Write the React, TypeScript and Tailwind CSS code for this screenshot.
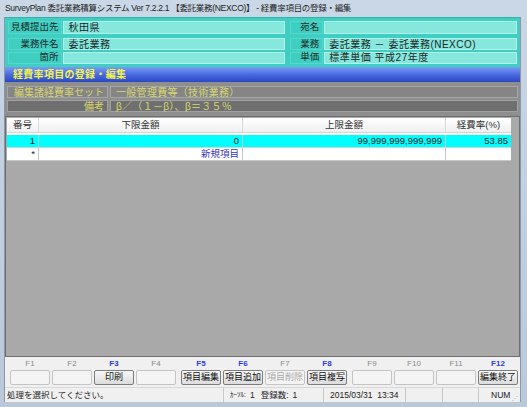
import React from 'react';

const fKeys = [
  { key: 'F1', label: '', on: false },
  { key: 'F2', label: '', on: false },
  { key: 'F3', label: '印刷', on: true },
  { key: 'F4', label: '', on: false },
  { key: 'F5', label: '項目編集', on: true },
  { key: 'F6', label: '項目追加', on: true },
  { key: 'F7', label: '項目削除', on: false },
  { key: 'F8', label: '項目複写', on: true },
  { key: 'F9', label: '', on: false },
  { key: 'F10', label: '', on: false },
  { key: 'F11', label: '', on: false },
  { key: 'F12', label: '編集終了', on: true },
];

function HeadLabel({ text, w }: { text: string; w: string }) {
  return (
    <div className={`${w} h-full flex items-center justify-end pr-[3px] text-[9.5px] whitespace-nowrap text-[#1a2a28] border border-[#58d8cb]`}>
      {text}
    </div>
  );
}

function HeadBox({ text, w }: { text: string; w: string }) {
  return (
    <div className={`${w} h-full flex items-center pl-[4px] text-[10px] tracking-[0.5px] whitespace-nowrap text-[#1a2a28] bg-[#86e7dc] border border-[#b2f2ea]`}>
      {text}
    </div>
  );
}

function FKeyGroup({ items }: { items: typeof fKeys }) {
  return (
    <div className="flex gap-[2px]">
      {items.map((f) => (
        <div key={f.key} className="w-[40px] flex flex-col items-center">
          <div className={`h-[11px] leading-[11px] text-[8px] ${f.on ? 'text-[#2b3cf0] font-bold' : 'text-[#8a8a8a]'}`}>{f.key}</div>
          {f.label && f.on ? (
            <div className="mt-[1px] w-full h-[15px] flex items-center justify-center text-[9px] text-[#111] rounded-[2px] border border-[#7d7d7d] bg-gradient-to-b from-[#f8f8f8] to-[#dcdcdc]">
              {f.label}
            </div>
          ) : (
            <div className="mt-[1px] w-full h-[15px] flex items-center justify-center text-[9px] text-[#a8a8a8] rounded-[2px] border border-[#c4c4c4] bg-[#f4f4f4]">
              {f.label}
            </div>
          )}
        </div>
      ))}
    </div>
  );
}

export default function App() {
  return (
    <div className="w-[527px] h-[407px] bg-gradient-to-b from-[#c9d7e6] to-[#b9c9da] font-['Liberation_Sans','Noto_Sans_CJK_JP',sans-serif] overflow-hidden">
      {/* title */}
      <div className="h-[17px] flex items-center pl-[5px] text-[8.5px] tracking-[-0.3px] text-[#1e1e1e] whitespace-nowrap">
        SurveyPlan 委託業務積算システム Ver 7.2.2.1 【委託業務(NEXCO)】 - 経費率項目の登録・編集
      </div>

      <div className="ml-[4px] w-[517px] h-[385px] flex flex-col border-l border-r border-[#8a98a8]">
        {/* header */}
        <div className="h-[50px] bg-[#3fcfc2] border-t border-[#2fb3a7] px-[3px] pt-[3px]">
          <div className="flex h-[13px] gap-[1px]">
            <HeadLabel text="見積提出先" w="w-[55px]" />
            <HeadBox text="秋田県" w="w-[224px]" />
            <div className="w-[3px]" />
            <HeadLabel text="宛名" w="w-[34px]" />
            <HeadBox text="" w="w-[195px]" />
          </div>
          <div className="flex h-[12px] gap-[1px] mt-[4px]">
            <HeadLabel text="業務件名" w="w-[55px]" />
            <HeadBox text="委託業務" w="w-[224px]" />
            <div className="w-[3px]" />
            <HeadLabel text="業務" w="w-[34px]" />
            <HeadBox text="委託業務 － 委託業務(NEXCO)" w="w-[195px]" />
          </div>
          <div className="flex h-[12px] gap-[1px] mt-[1.5px]">
            <HeadLabel text="箇所" w="w-[55px]" />
            <HeadBox text="" w="w-[224px]" />
            <div className="w-[3px]" />
            <HeadLabel text="単価" w="w-[34px]" />
            <HeadBox text="標準単価 平成27年度" w="w-[195px]" />
          </div>
        </div>

        {/* blue section bar */}
        <div className="h-[15px] flex items-center pl-[8px] bg-gradient-to-b from-[#7b9cf2] via-[#4a6ae0] to-[#2c48c4] text-[10px] font-bold tracking-[0.3px] text-[#f4f44a]">
          経費率項目の登録・編集
        </div>

        {/* gray rows */}
        <div className="h-[34px] bg-[#8e8e8e] px-[2px] pt-[4px] flex flex-col gap-[2px]">
          <div className="flex h-[12px] gap-[2px]">
            <div className="w-[101px] flex items-center justify-end pr-[3px] text-[10px] text-[#d8d670] bg-[#858585] border border-[#a6a6a6]">編集諸経費率セット</div>
            <div className="flex-1 flex items-center pl-[5px] text-[10px] tracking-[0.3px] text-[#d8d670] bg-[#858585] border border-[#a6a6a6]">一般管理費等（技術業務）</div>
          </div>
          <div className="flex h-[12px] gap-[2px]">
            <div className="w-[101px] flex items-center justify-end pr-[3px] text-[10px] text-[#d8d670] bg-[#6f6f6f] border border-[#a0a0a0]">備考</div>
            <div className="flex-1 flex items-center pl-[5px] text-[10px] tracking-[0.3px] text-[#d8d670] bg-[#6f6f6f] border border-[#a0a0a0]">β／（１－β）、β＝３５％</div>
          </div>
        </div>

        {/* grid */}
        <div className="h-[241px] bg-[#a9a9a9] border border-[#6e6e6e] pl-[1px] pt-[1px]">
          <div className="w-[504px] text-[9.5px] text-[#222]">
            <div className="flex h-[15px] bg-gradient-to-b from-[#ffffff] to-[#f0f0f0] border-b border-[#d4d4d4] text-[#333]">
              <div className="w-[32px] flex items-center justify-center border-r border-[#dadada]">番号</div>
              <div className="w-[204px] flex items-center justify-center border-r border-[#dadada]">下限金額</div>
              <div className="w-[203px] flex items-center justify-center border-r border-[#dadada]">上限金額</div>
              <div className="w-[65px] flex items-center justify-center">経費率(%)</div>
            </div>
            <div className="h-[2px] bg-white" />
            <div className="flex h-[13px] bg-[#00ffff] border-b border-[#d4d4d4]">
              <div className="w-[32px] flex items-center justify-end pr-[3px] border-r border-[#c8c8c8]">1</div>
              <div className="w-[204px] flex items-center justify-end pr-[3px] border-r border-[#c8c8c8]">0</div>
              <div className="w-[203px] flex items-center justify-end pr-[3px] border-r border-[#c8c8c8]">99,999,999,999,999</div>
              <div className="w-[65px] flex items-center justify-end pr-[3px]">53.85</div>
            </div>
            <div className="flex h-[13px] bg-white border-b border-[#c8c8c8]">
              <div className="w-[32px] flex items-center justify-end pr-[3px] border-r border-[#c8c8c8]">*</div>
              <div className="w-[204px] flex items-center justify-end pr-[3px] border-r border-[#c8c8c8] text-[#3333c8]">新規項目</div>
              <div className="w-[203px] border-r border-[#c8c8c8]" />
              <div className="w-[65px]" />
            </div>
          </div>
        </div>

        {/* function keys */}
        <div className="h-[30px] bg-[#f0f0f0] flex gap-[5px] pl-[5px] pt-[1px]">
          <FKeyGroup items={fKeys.slice(0, 4)} />
          <FKeyGroup items={fKeys.slice(4, 8)} />
          <FKeyGroup items={fKeys.slice(8, 12)} />
        </div>

        {/* status bar */}
        <div className="h-[15px] bg-[#f0f0f0] flex text-[8.5px] text-[#222] border-t border-[#d8d8d8]">
          <div className="w-[219px] flex items-center pl-[2px] border-r border-[#c8c8c8]">処理を選択してください。</div>
          <div className="w-[100px] flex items-center pl-[6px] gap-[4px] border-r border-[#c8c8c8] whitespace-nowrap">
            <span className="text-[7px]">ｶｰｿﾙ:</span><span>1</span><span className="ml-[2px]">登録数:</span><span>1</span>
          </div>
          <div className="w-[82px] flex items-center pl-[6px] border-r border-[#c8c8c8] whitespace-nowrap">2015/03/31&nbsp; 13:34</div>
          <div className="w-[37px] border-r border-[#c8c8c8]" />
          <div className="w-[36px] border-r border-[#c8c8c8]" />
          <div className="flex-1 flex items-center pl-[12px] relative">
            NUM
            <span className="absolute right-[2px] bottom-[1px] text-[6px] leading-[6px] text-[#9a9a9a]">⋰</span>
          </div>
        </div>
      </div>
    </div>
  );
}
